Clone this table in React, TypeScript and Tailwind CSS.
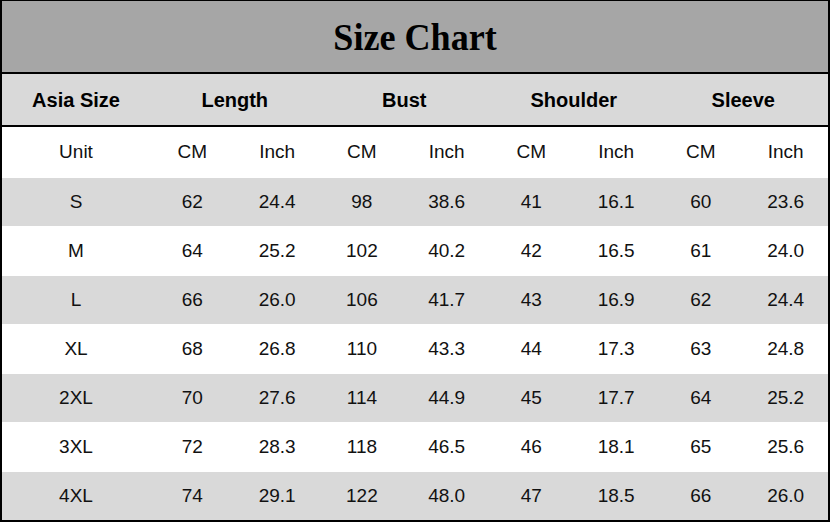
import React from "react";

const rows: string[][] = [
  ["S", "62", "24.4", "98", "38.6", "41", "16.1", "60", "23.6"],
  ["M", "64", "25.2", "102", "40.2", "42", "16.5", "61", "24.0"],
  ["L", "66", "26.0", "106", "41.7", "43", "16.9", "62", "24.4"],
  ["XL", "68", "26.8", "110", "43.3", "44", "17.3", "63", "24.8"],
  ["2XL", "70", "27.6", "114", "44.9", "45", "17.7", "64", "25.2"],
  ["3XL", "72", "28.3", "118", "46.5", "46", "18.1", "65", "25.6"],
  ["4XL", "74", "29.1", "122", "48.0", "47", "18.5", "66", "26.0"],
];

const headers = ["Asia Size", "Length", "Bust", "Shoulder", "Sleeve"];
const units = ["Unit", "CM", "Inch", "CM", "Inch", "CM", "Inch", "CM", "Inch"];

const App: React.FC = () => {
  return (
    <div className="w-[830px] h-[522px] bg-white border-t border-x-2 border-b-2 border-black font-['Liberation_Sans',Arial,sans-serif] text-[#111]">
      {/* title */}
      <div className="h-[73px] flex items-center justify-center bg-[#a6a6a6] border-b-2 border-black">
        <h1 className="pt-[2px] text-[38px] font-bold text-black font-['Liberation_Serif','Times_New_Roman',serif] scale-x-95">
          Size Chart
        </h1>
      </div>

      {/* column groups */}
      <div className="h-[53px] grid grid-cols-[148px_repeat(4,1fr)] items-center bg-[#d9d9d9] border-b-2 border-black text-[20px] font-bold text-black">
        {headers.map((h) => (
          <div key={h} className="text-center">
            {h}
          </div>
        ))}
      </div>

      {/* unit row */}
      <div className="h-[51px] grid grid-cols-[148px_repeat(8,1fr)] items-center text-[19px]">
        {units.map((u, i) => (
          <div key={i} className="text-center">
            {u}
          </div>
        ))}
      </div>

      {rows.map((row, r) => (
        <div
          key={row[0]}
          className={`grid grid-cols-[148px_repeat(8,1fr)] items-center text-[19px] ${
            r % 2 === 0 ? "h-[48px] bg-[#d9d9d9]" : "h-[50px] bg-white"
          }`}
        >
          {row.map((cell, i) => (
            <div key={i} className="text-center">
              {cell}
            </div>
          ))}
        </div>
      ))}
    </div>
  );
};

export default App;
